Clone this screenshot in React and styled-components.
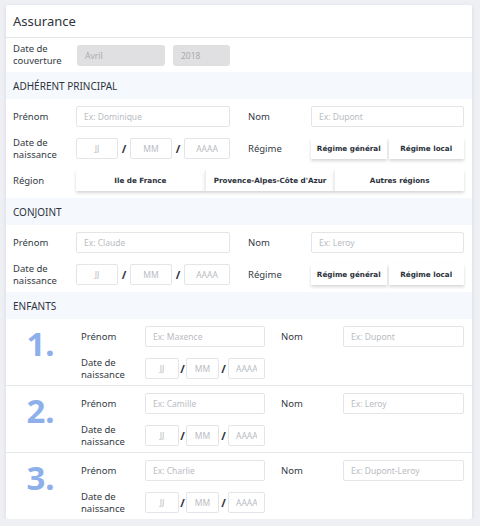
import React from "react";
import styled, { createGlobalStyle } from "styled-components";

const Global = createGlobalStyle`
  html, body { margin: 0; padding: 0; }
  body {
    background: #eef0f4;
    font-family: "Noto Sans", "DejaVu Sans", sans-serif;
    color: #333a44;
  }
  * { box-sizing: border-box; }
  input::placeholder { color: #b9bcc2; }
`;

const Card = styled.div`
  width: 466px;
  margin: 5px 0 0 6px;
  background: #fff;
  box-shadow: 0 1px 4px rgba(40, 50, 70, 0.12);
  border-radius: 2px;
`;

const Header = styled.div`
  height: 33px;
  display: flex;
  align-items: center;
  padding-left: 7px;
  font-size: 13px;
  color: #2f343c;
  border-bottom: 1px solid #e2e4e8;
`;

const CoverRow = styled.div`
  height: 34px;
  display: flex;
  align-items: center;
  padding-left: 7px;
`;

const Label = styled.div`
  font-size: 9.5px;
  line-height: 12px;
  color: #343a44;
  width: ${(p) => p.$w || 63}px;
  flex: none;
`;

const GreyBox = styled.div`
  width: ${(p) => p.$w}px;
  height: 21px;
  margin-right: ${(p) => p.$mr || 0}px;
  background: #e0e0e2;
  border-radius: 3px;
  display: flex;
  align-items: center;
  padding-left: 8px;
  font-size: 8.5px;
  color: #a9abb0;
`;

const Band = styled.div`
  height: 27px;
  background: #f5f8fc;
  display: flex;
  align-items: center;
  padding-left: 7px;
  font-size: 10px;
  color: #2f343c;
`;

const Block = styled.div`
  display: grid;
  grid-template-columns: 63px 154px 18px 63px 153px;
  grid-auto-rows: 21px;
  row-gap: 11px;
  align-items: center;
  padding: 7px 0 7px 7px;
`;

const Field = styled.input`
  width: ${(p) => (p.$w ? `${p.$w}px` : "100%")};
  height: 21px;
  border: 1px solid #e3e5e8;
  border-radius: 2px;
  padding: 0 7px;
  font-family: inherit;
  font-size: 8.5px;
  color: #333;
  text-align: ${(p) => (p.$center ? "center" : "left")};
  outline: none;
  background: #fff;
  flex: none;
`;

const DateGroup = styled.div`
  display: flex;
  align-items: center;
`;

const Slash = styled.span`
  width: ${(p) => p.$w}px;
  text-align: center;
  font-size: 11px;
  font-weight: 700;
  color: #2f343c;
  flex: none;
`;

const Segmented = styled.div`
  display: flex;
  height: 21px;
  gap: ${(p) => p.$gap || 0}px;
  grid-column: ${(p) => p.$span || "auto"};
`;

const Choice = styled.button`
  flex: 1;
  height: 21px;
  border: none;
  border-left: ${(p) => (p.$divider ? "1px solid #eceef1" : "none")};
  background: #fff;
  box-shadow: 0 2px 3px rgba(0, 0, 0, 0.16);
  font-family: "DejaVu Sans", sans-serif;
  font-weight: 700;
  font-size: 7.2px;
  letter-spacing: 0;
  color: #2b313b;
  padding: 0;
  cursor: pointer;
`;

const Child = styled.div`
  display: grid;
  grid-template-columns: 75px 64px 120px 16px 62px 121px;
  grid-template-rows: 21px 21px;
  row-gap: 11px;
  align-items: center;
  padding: 7px 0 6px;
  border-bottom: ${(p) => (p.$last ? "none" : "1px solid #e4e6ea")};
`;

const Num = styled.div`
  grid-row: 1 / span 2;
  align-self: start;
  margin-top: 0;
  text-align: center;
  padding-right: 6px;
  font-size: 33px;
  line-height: 36px;
  font-weight: 700;
  color: #8eb0ea;
`;

const Gap = styled.div``;

function DateField({ sizes, slashes }) {
  return (
    <DateGroup>
      <Field $w={sizes[0]} $center placeholder="JJ" />
      <Slash $w={slashes[0]}>/</Slash>
      <Field $w={sizes[1]} $center placeholder="MM" />
      <Slash $w={slashes[1]}>/</Slash>
      <Field $w={sizes[2]} $center placeholder="AAAA" />
    </DateGroup>
  );
}

function Regime() {
  return (
    <Segmented $gap={2}>
      <Choice>Régime général</Choice>
      <Choice>Régime local</Choice>
    </Segmented>
  );
}

function Person({ first, last, withRegion }) {
  return (
    <Block>
      <Label>Prénom</Label>
      <Field placeholder={first} />
      <Gap />
      <Label>Nom</Label>
      <Field placeholder={last} />

      <Label>
        Date de
        <br />
        naissance
      </Label>
      <DateField sizes={[42, 42, 46]} slashes={[12, 12]} />
      <Gap />
      <Label>Régime</Label>
      <Regime />

      {withRegion && (
        <>
          <Label>Région</Label>
          <Segmented $span="2 / span 4">
            <Choice>Ile de France</Choice>
            <Choice $divider>Provence-Alpes-Côte d'Azur</Choice>
            <Choice $divider>Autres régions</Choice>
          </Segmented>
        </>
      )}
    </Block>
  );
}

const children = [
  { n: "1.", first: "Ex: Maxence", last: "Ex: Dupont" },
  { n: "2.", first: "Ex: Camille", last: "Ex: Leroy" },
  { n: "3.", first: "Ex: Charlie", last: "Ex: Dupont-Leroy" },
];

export default function App() {
  return (
    <>
      <Global />
      <Card>
        <Header>Assurance</Header>
        <CoverRow>
          <Label $w={64}>
            Date de
            <br />
            couverture
          </Label>
          <GreyBox $w={88} $mr={8}>Avril</GreyBox>
          <GreyBox $w={57}>2018</GreyBox>
        </CoverRow>

        <Band>ADHÉRENT PRINCIPAL</Band>
        <Person first="Ex: Dominique" last="Ex: Dupont" withRegion />

        <Band>CONJOINT</Band>
        <Person first="Ex: Claude" last="Ex: Leroy" />

        <Band>ENFANTS</Band>
        {children.map((c, i) => (
          <Child key={c.n} $last={i === children.length - 1}>
            <Num>{c.n}</Num>
            <Label>Prénom</Label>
            <Field placeholder={c.first} />
            <Gap />
            <Label>Nom</Label>
            <Field placeholder={c.last} />
            <Label>
              Date de
              <br />
              naissance
            </Label>
            <DateField sizes={[34, 33, 37]} slashes={[7, 9]} />
          </Child>
        ))}
      </Card>
    </>
  );
}
